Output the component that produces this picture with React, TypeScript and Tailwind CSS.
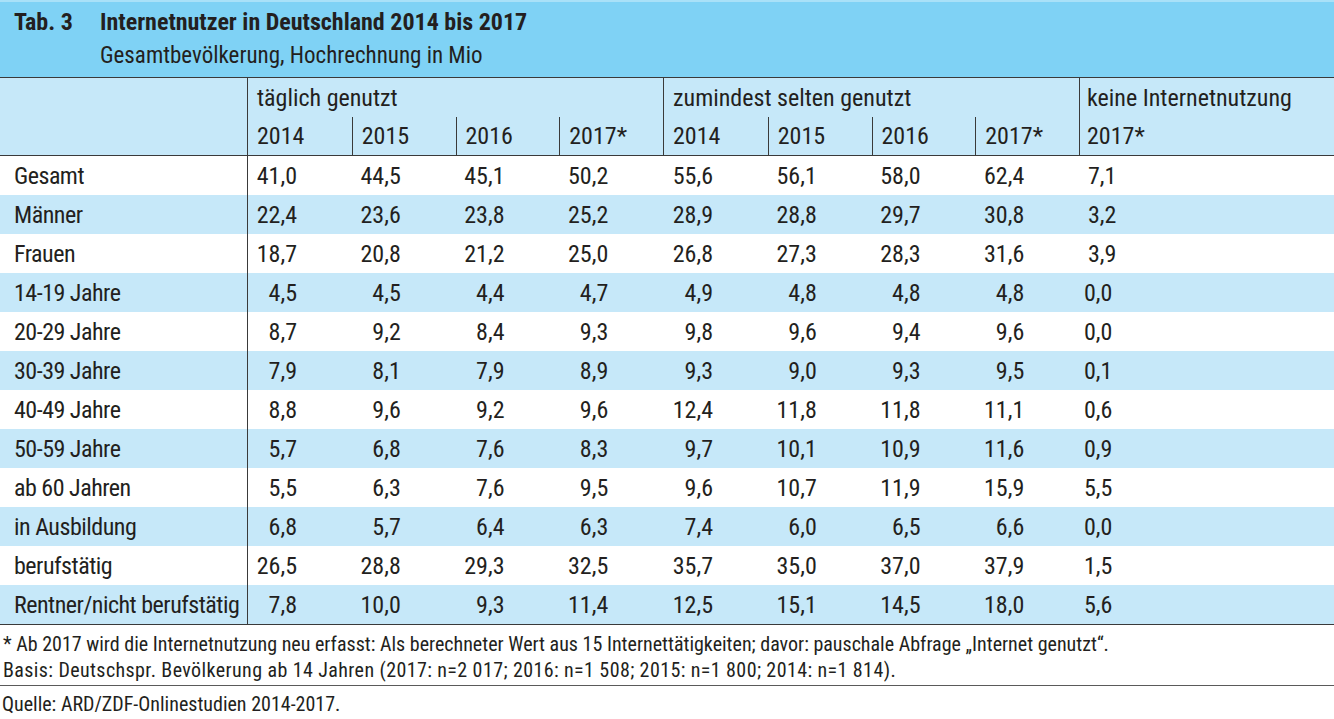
const rows: [string, string[]][] = [
  ["Gesamt", ["41,0", "44,5", "45,1", "50,2", "55,6", "56,1", "58,0", "62,4", "7,1"]],
  ["Männer", ["22,4", "23,6", "23,8", "25,2", "28,9", "28,8", "29,7", "30,8", "3,2"]],
  ["Frauen", ["18,7", "20,8", "21,2", "25,0", "26,8", "27,3", "28,3", "31,6", "3,9"]],
  ["14-19 Jahre", ["4,5", "4,5", "4,4", "4,7", "4,9", "4,8", "4,8", "4,8", "0,0"]],
  ["20-29 Jahre", ["8,7", "9,2", "8,4", "9,3", "9,8", "9,6", "9,4", "9,6", "0,0"]],
  ["30-39 Jahre", ["7,9", "8,1", "7,9", "8,9", "9,3", "9,0", "9,3", "9,5", "0,1"]],
  ["40-49 Jahre", ["8,8", "9,6", "9,2", "9,6", "12,4", "11,8", "11,8", "11,1", "0,6"]],
  ["50-59 Jahre", ["5,7", "6,8", "7,6", "8,3", "9,7", "10,1", "10,9", "11,6", "0,9"]],
  ["ab 60 Jahren", ["5,5", "6,3", "7,6", "9,5", "9,6", "10,7", "11,9", "15,9", "5,5"]],
  ["in Ausbildung", ["6,8", "5,7", "6,4", "6,3", "7,4", "6,0", "6,5", "6,6", "0,0"]],
  ["berufstätig", ["26,5", "28,8", "29,3", "32,5", "35,7", "35,0", "37,0", "37,9", "1,5"]],
  ["Rentner/nicht berufstätig", ["7,8", "10,0", "9,3", "11,4", "12,5", "15,1", "14,5", "18,0", "5,6"]],
];

const years = ["2014", "2015", "2016", "2017*"];

function Num({ v }: { v: string }) {
  return (
    <div className="flex items-center pl-[1px]">
      <span className="w-[48px] text-right">{v}</span>
    </div>
  );
}

function YearRow() {
  return (
    <div className="grid h-[38px] grid-cols-4">
      {years.map((y, i) => (
        <div key={y} className={`flex items-center pl-[9px] ${i > 0 ? "border-l border-[#3a3a3a]" : ""}`}>
          {y}
        </div>
      ))}
    </div>
  );
}

export default function App() {
  return (
    <div className="flex h-[719px] w-[1334px] flex-col bg-white font-['Liberation_Sans_Narrow','Roboto_Condensed','DejaVu_Sans_Condensed',sans-serif] text-[#231f20]">
      {/* title band */}
      <header className="flex h-[77px] flex-col justify-center gap-[10px] border-t-2 border-[#a9e1f8] bg-[#7fd2f5] pb-[2px]">
        <div className="flex items-baseline text-[24px] font-bold leading-none">
          <span className="w-[100px] pl-[14px]">Tab. 3</span>
          <span>Internetnutzer in Deutschland 2014 bis 2017</span>
        </div>
        <div className="pl-[100px] text-[23px] leading-none">
          Gesamtbevölkerung, Hochrechnung in Mio
        </div>
      </header>

      {/* column heads */}
      <div className="flex border-y border-[#3a3a3a] bg-[#c6e8f9] text-[24px] leading-none">
        <div className="w-[248px] border-r border-[#3a3a3a]" />
        <div className="flex w-[415px] flex-col">
          <div className="flex h-[39px] items-center pl-[9px]">täglich genutzt</div>
          <YearRow />
        </div>
        <div className="flex w-[416px] flex-col border-l border-[#3a3a3a]">
          <div className="flex h-[39px] items-center pl-[9px]">zumindest selten genutzt</div>
          <YearRow />
        </div>
        <div className="flex flex-1 flex-col border-l border-[#3a3a3a]">
          <div className="flex h-[39px] items-center pl-[7px]">keine Internetnutzung</div>
          <div className="flex h-[38px] items-center pl-[7px]">2017*</div>
        </div>
      </div>

      {/* body */}
      <div className="flex flex-col border-b border-[#3a3a3a] text-[24px] leading-none">
        {rows.map(([label, vals], r) => (
          <div key={label} className={`flex h-[39px] ${r % 2 === 1 ? "bg-[#c6e8f9]" : "bg-white"}`}>
            <div className="flex w-[248px] items-center border-r border-[#3a3a3a] pl-[14px] whitespace-nowrap tracking-[-0.5px]">
              {label}
            </div>
            <div className="grid w-[415px] grid-cols-4">
              {vals.slice(0, 4).map((v, i) => (
                <Num key={i} v={v} />
              ))}
            </div>
            <div className="grid w-[416px] grid-cols-4 pl-[1px]">
              {vals.slice(4, 8).map((v, i) => (
                <Num key={i} v={v} />
              ))}
            </div>
            <div className={`flex flex-1 items-center ${r < 3 ? "pl-[9px]" : "pl-[5px]"}`}>{vals[8]}</div>
          </div>
        ))}
      </div>

      {/* notes */}
      <div className="flex flex-col gap-[6px] border-b border-[#5a5a5a] pt-[9px] pb-[5px] pl-[3px] text-[20px] leading-none whitespace-nowrap">
        <p>
          * Ab 2017 wird die Internetnutzung neu erfasst: Als berechneter Wert aus 15 Internettätigkeiten; davor:
          pauschale Abfrage „Internet genutzt“.
        </p>
        <p className="tracking-[0.4px]">
          Basis: Deutschspr. Bevölkerung ab 14 Jahren (2017: n=2 017; 2016: n=1 508; 2015: n=1 800; 2014: n=1 814).
        </p>
      </div>
      <p className="pt-[8px] pl-[2px] text-[20px] leading-none">Quelle: ARD/ZDF-Onlinestudien 2014-2017.</p>
    </div>
  );
}
